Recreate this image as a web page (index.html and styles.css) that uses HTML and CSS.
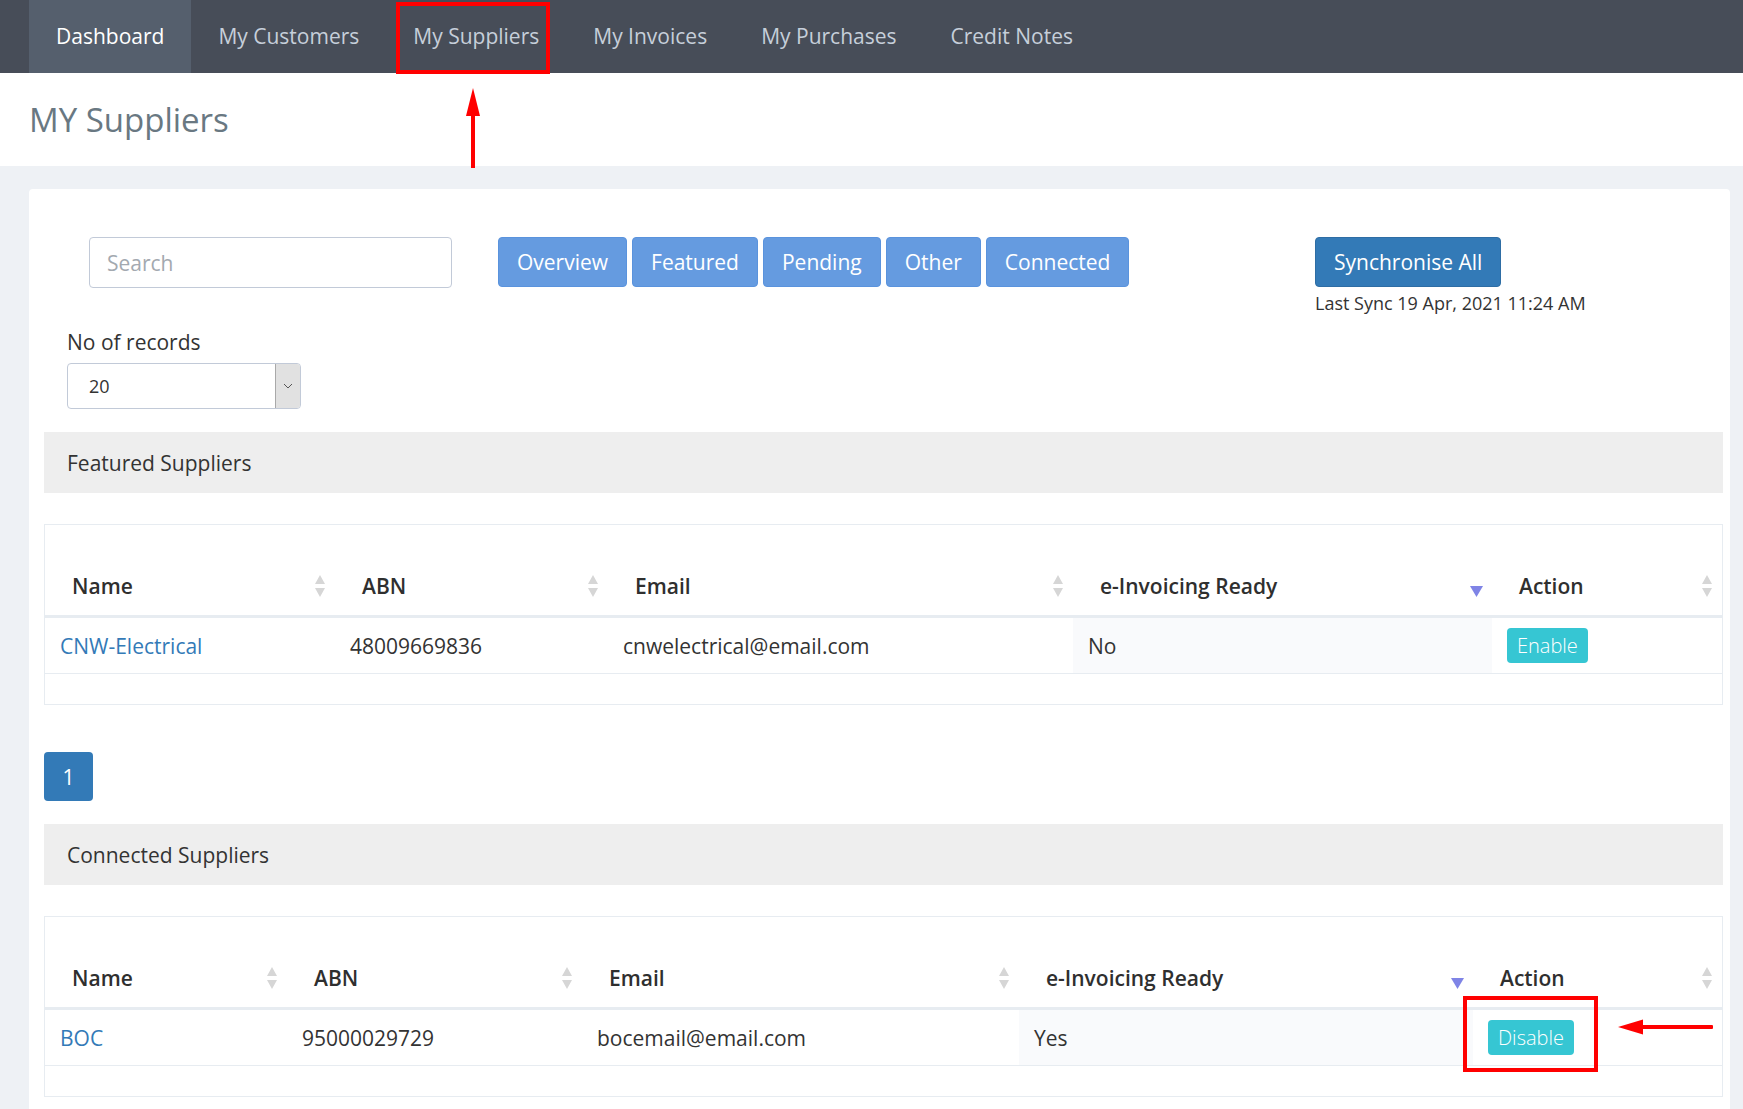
FILE: index.html
```html
<!DOCTYPE html>
<html lang="en">
<head>
<meta charset="utf-8">
<title>MY Suppliers</title>
<link rel="stylesheet" href="styles.css">
</head>
<body>
<nav class="topnav">
  <a class="tab active" href="#">Dashboard</a>
  <a class="tab" href="#">My Customers</a>
  <a class="tab" href="#">My Suppliers</a>
  <a class="tab" href="#">My Invoices</a>
  <a class="tab" href="#">My Purchases</a>
  <a class="tab" href="#">Credit Notes</a>
</nav>
<header class="page-head"><h1>MY Suppliers</h1></header>
<main class="page">
  <section class="card">
    <div class="toolbar">
      <input class="search" type="text" placeholder="Search">
      <div class="filters">
        <button class="btn btn-soft">Overview</button>
        <button class="btn btn-soft">Featured</button>
        <button class="btn btn-soft">Pending</button>
        <button class="btn btn-soft">Other</button>
        <button class="btn btn-soft">Connected</button>
      </div>
      <div class="sync">
        <button class="btn btn-primary">Synchronise All</button>
        <div class="last-sync">Last Sync 19 Apr, 2021 11:24 AM</div>
      </div>
    </div>

    <div class="records">
      <label class="records-label">No of records</label>
      <div class="select">
        <span class="select-value">20</span>
        <span class="select-arrow"><svg width="10" height="6" viewBox="0 0 10 6"><polyline points="1,1 5,5 9,1" fill="none" stroke="#555" stroke-width="1"/></svg></span>
      </div>
    </div>

    <div class="bar">Featured Suppliers</div>
    <div class="table-box">
      <table class="grid">
        <colgroup><col style="width:290px"><col style="width:273px"><col style="width:465px"><col style="width:419px"><col style="width:230px"></colgroup>
        <thead>
          <tr>
            <th><div class="th-in"><span>Name</span><svg class="sort" width="12" height="24" viewBox="0 0 12 24"><path d="M6 1 L11 10 H1 Z M1 14 H11 L6 23 Z" fill="#d6d6d6"/></svg></div></th>
            <th><div class="th-in"><span>ABN</span><svg class="sort" width="12" height="24" viewBox="0 0 12 24"><path d="M6 1 L11 10 H1 Z M1 14 H11 L6 23 Z" fill="#d6d6d6"/></svg></div></th>
            <th><div class="th-in"><span>Email</span><svg class="sort" width="12" height="24" viewBox="0 0 12 24"><path d="M6 1 L11 10 H1 Z M1 14 H11 L6 23 Z" fill="#d6d6d6"/></svg></div></th>
            <th><div class="th-in"><span>e-Invoicing Ready</span><svg class="sort-desc" width="13" height="11" viewBox="0 0 13 11"><path d="M0 0 H13 L6.5 11 Z" fill="#7f84e6"/></svg></div></th>
            <th><div class="th-in"><span>Action</span><svg class="sort" width="12" height="24" viewBox="0 0 12 24"><path d="M6 1 L11 10 H1 Z M1 14 H11 L6 23 Z" fill="#d6d6d6"/></svg></div></th>
          </tr>
        </thead>
        <tbody>
          <tr>
            <td><a class="link" href="#">CNW-Electrical</a></td>
            <td>48009669836</td>
            <td>cnwelectrical@email.com</td>
            <td class="sorted">No</td>
            <td><span class="act">Enable</span></td>
          </tr>
        </tbody>
      </table>
    </div>

    <div class="pager"><span class="page-btn">1</span></div>

    <div class="bar">Connected Suppliers</div>
    <div class="table-box">
      <table class="grid">
        <colgroup><col style="width:242px"><col style="width:295px"><col style="width:437px"><col style="width:454px"><col style="width:249px"></colgroup>
        <thead>
          <tr>
            <th><div class="th-in"><span>Name</span><svg class="sort" width="12" height="24" viewBox="0 0 12 24"><path d="M6 1 L11 10 H1 Z M1 14 H11 L6 23 Z" fill="#d6d6d6"/></svg></div></th>
            <th><div class="th-in"><span>ABN</span><svg class="sort" width="12" height="24" viewBox="0 0 12 24"><path d="M6 1 L11 10 H1 Z M1 14 H11 L6 23 Z" fill="#d6d6d6"/></svg></div></th>
            <th><div class="th-in"><span>Email</span><svg class="sort" width="12" height="24" viewBox="0 0 12 24"><path d="M6 1 L11 10 H1 Z M1 14 H11 L6 23 Z" fill="#d6d6d6"/></svg></div></th>
            <th><div class="th-in"><span>e-Invoicing Ready</span><svg class="sort-desc" width="13" height="11" viewBox="0 0 13 11"><path d="M0 0 H13 L6.5 11 Z" fill="#7f84e6"/></svg></div></th>
            <th><div class="th-in"><span>Action</span><svg class="sort" width="12" height="24" viewBox="0 0 12 24"><path d="M6 1 L11 10 H1 Z M1 14 H11 L6 23 Z" fill="#d6d6d6"/></svg></div></th>
          </tr>
        </thead>
        <tbody>
          <tr>
            <td><a class="link" href="#">BOC</a></td>
            <td>95000029729</td>
            <td>bocemail@email.com</td>
            <td class="sorted">Yes</td>
            <td><span class="act">Disable</span></td>
          </tr>
        </tbody>
      </table>
    </div>
  </section>
</main>

<div class="ann-box ann-nav"></div>
<svg class="ann-arrow-up" width="20" height="84" viewBox="0 0 20 84"><path d="M10 2 L17 30 H3 Z" fill="#f00"/><rect x="8" y="28" width="4" height="54" fill="#f00"/></svg>
<div class="ann-box ann-disable"></div>
<svg class="ann-arrow-left" width="100" height="20" viewBox="0 0 100 20"><path d="M3 10 L28 2.5 V17.5 Z" fill="#f00"/><rect x="26" y="8" width="72" height="4" rx="1" fill="#f00"/></svg>
</body>
</html>
```

FILE: styles.css
```css
* { box-sizing: border-box; }

body {
  margin: 0;
  font-family: "Open Sans", "Liberation Sans", sans-serif;
  font-size: 21px;
  color: #333;
  background: #eef1f5;
  position: relative;
  min-height: 1109px;
}

/* top navigation */
.topnav {
  display: flex;
  height: 73px;
  background: #474d58;
  padding-left: 29px;
}
.tab {
  padding: 0 27px;
  line-height: 73px;
  color: #c6cfda;
  text-decoration: none;
  font-size: 21px;
  white-space: nowrap;
}
.tab.active {
  background: #555f6d;
  color: #fff;
}

/* page title */
.page-head {
  background: #fff;
  height: 93px;
  display: flex;
  align-items: center;
  padding-left: 29px;
}
.page-head h1 {
  margin: 0;
  font-size: 33px;
  font-weight: 400;
  color: #697882;
}

.page {
  padding: 23px 13px 0 29px;
}
.card {
  background: #fff;
  border-radius: 4px;
  padding: 48px 7px 40px 15px;
}

/* toolbar */
.toolbar {
  display: flex;
  align-items: flex-start;
  padding-left: 45px;
}
.search {
  width: 363px;
  height: 51px;
  border: 1px solid #c2cad8;
  border-radius: 4px;
  padding: 0 17px;
  font-family: inherit;
  font-size: 21px;
  color: #555;
  outline: none;
}
.search::placeholder { color: #a3a9b0; }

.filters {
  width: 817px;
  margin-left: 46px;
  display: flex;
  gap: 5px;
}
.btn {
  height: 50px;
  padding: 0 18px;
  font-family: inherit;
  font-size: 21px;
  color: #fff;
  border-radius: 4px;
  cursor: pointer;
  white-space: nowrap;
}
.btn-soft {
  background: #659be0;
  border: 1px solid #5a93dd;
}
.btn-primary {
  background: #337ab7;
  border: 1px solid #2e6da4;
}
.last-sync {
  font-size: 18px;
  line-height: 26px;
  margin-top: 3px;
  color: #333;
  white-space: nowrap;
}

/* records select */
.records {
  padding-left: 23px;
  margin-top: 11px;
}
.records-label {
  display: block;
  line-height: 30px;
  margin-bottom: 6px;
}
.select {
  width: 234px;
  height: 46px;
  border: 1px solid #c2cad8;
  border-radius: 4px;
  display: flex;
  align-items: center;
  justify-content: space-between;
  font-size: 18px;
  overflow: hidden;
}
.select-value { padding-left: 21px; }
.select-arrow {
  width: 25px;
  align-self: stretch;
  background: #e1e1e1;
  border-left: 1px solid #a9a9a9;
  display: flex;
  align-items: center;
  justify-content: center;
}

/* section bars */
.bar {
  margin-top: 23px;
  height: 61px;
  background: #eee;
  display: flex;
  align-items: center;
  padding-left: 23px;
  font-size: 21px;
  color: #333;
}

/* tables */
.table-box {
  margin-top: 31px;
  border: 1px solid #e7ecf1;
  padding-bottom: 30px;
}
.grid {
  width: 100%;
  border-collapse: separate;
  border-spacing: 0;
  table-layout: fixed;
}
.grid th {
  text-align: left;
  padding: 46px 9px 14px 27px;
  border-bottom: 3px solid #e7ecf1;
  font-weight: 600;
  line-height: 30px;
  color: #2f2f2f;
  white-space: nowrap;
}
.th-in {
  display: flex;
  justify-content: space-between;
  align-items: center;
}
.sort-desc { margin-top: 10px; }
.grid td {
  height: 56px;
  padding: 0 15px;
  border-bottom: 1px solid #e7ecf1;
  line-height: 30px;
  white-space: nowrap;
}
.grid td.sorted { background: #f9fafc; }
.link {
  color: #337ab7;
  text-decoration: none;
}
.act {
  display: inline-block;
  background: #36c6d3;
  color: #fff;
  font-size: 20px;
  font-weight: 300;
  line-height: 31px;
  padding: 2px 10px;
  border-radius: 4px;
}

/* pagination */
.pager { margin-top: 47px; }
.page-btn {
  display: inline-flex;
  width: 49px;
  height: 49px;
  align-items: center;
  justify-content: center;
  background: #337ab7;
  color: #fff;
  border-radius: 4px;
}

/* annotations overlay */
.ann-box {
  position: absolute;
  border: 4px solid #f00;
}
.ann-nav { left: 396px; top: 2px; width: 154px; height: 72px; }
.ann-disable { left: 1463px; top: 996px; width: 135px; height: 76px; }
.ann-arrow-up { position: absolute; left: 463px; top: 86px; }
.ann-arrow-left { position: absolute; left: 1615px; top: 1017px; }
```
